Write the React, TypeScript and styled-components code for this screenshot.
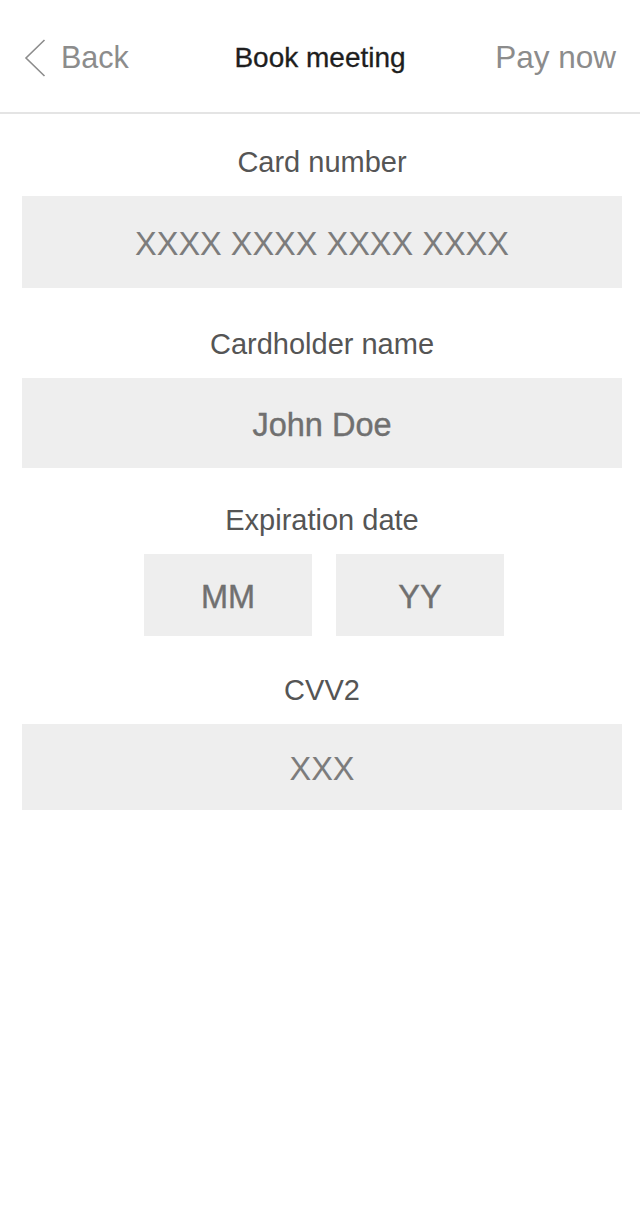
import React from "react";
import styled, { createGlobalStyle } from "styled-components";

const Global = createGlobalStyle`
  html, body { margin: 0; padding: 0; background: #ffffff; }
  body { font-family: "Liberation Sans", Arial, sans-serif; }
  * { box-sizing: border-box; }
`;

const Page = styled.div`
  width: 640px;
  min-height: 1218px;
  background: #ffffff;
`;

const Header = styled.header`
  height: 114px;
  border-bottom: 2px solid #e4e4e4;
  display: grid;
  grid-template-columns: 1fr auto 1fr;
  align-items: center;
  padding: 3px 24px 0 24px;
`;

const BackButton = styled.button`
  justify-self: start;
  display: flex;
  align-items: center;
  gap: 15px;
  background: none;
  border: none;
  padding: 0;
  font-family: inherit;
  font-size: 30.5px;
  color: #8c8c8c;
  cursor: pointer;
`;

const Title = styled.h1`
  margin: 0;
  font-size: 28px;
  font-weight: 400;
  color: #1e1e1e;
  -webkit-text-stroke: 0.3px #1e1e1e;
`;

const PayButton = styled.button`
  justify-self: end;
  background: none;
  border: none;
  padding: 0;
  font-family: inherit;
  font-size: 31.5px;
  color: #8c8c8c;
  cursor: pointer;
`;

const Form = styled.form`
  display: flex;
  flex-direction: column;
  padding: 32px 18px 0 22px;
`;

const Field = styled.div<{ $top: number }>`
  display: flex;
  flex-direction: column;
  align-items: center;
  margin-top: ${(p) => p.$top}px;
`;

const Label = styled.label`
  font-size: 29px;
  line-height: 32px;
  color: #555555;
  margin-bottom: 18px;
`;

const InputBox = styled.div<{ $h: number; $w?: number; $strong?: boolean }>`
  width: ${(p) => (p.$w ? `${p.$w}px` : "100%")};
  height: ${(p) => p.$h}px;
  background: #eeeeee;
  display: flex;
  align-items: center;
  justify-content: center;
  padding-top: 4px;
  font-size: 32.5px;
  color: ${(p) => (p.$strong ? "#707070" : "#7c7c7c")};
  -webkit-text-stroke: ${(p) => (p.$strong ? "0.4px #707070" : "0")};
`;

const Row = styled.div`
  display: flex;
  gap: 24px;
  justify-content: center;
  width: 100%;
  padding-left: 4px;
`;

const Chevron = () => (
  <svg width="22" height="38" viewBox="0 0 22 38" fill="none">
    <path d="M20.5 1 L2 19 L20.5 37" stroke="#8c8c8c" strokeWidth="1.6" />
  </svg>
);

export default function App() {
  return (
    <Page>
      <Global />
      <Header>
        <BackButton type="button">
          <Chevron />
          Back
        </BackButton>
        <Title>Book meeting</Title>
        <PayButton type="button">Pay now</PayButton>
      </Header>
      <Form>
        <Field $top={0}>
          <Label>Card number</Label>
          <InputBox $h={92}>XXXX XXXX XXXX XXXX</InputBox>
        </Field>
        <Field $top={40}>
          <Label>Cardholder name</Label>
          <InputBox $h={90} $strong>John Doe</InputBox>
        </Field>
        <Field $top={36}>
          <Label>Expiration date</Label>
          <Row>
            <InputBox $h={82} $w={168} $strong>MM</InputBox>
            <InputBox $h={82} $w={168} $strong>YY</InputBox>
          </Row>
        </Field>
        <Field $top={38}>
          <Label>CVV2</Label>
          <InputBox $h={86}>XXX</InputBox>
        </Field>
      </Form>
    </Page>
  );
}
